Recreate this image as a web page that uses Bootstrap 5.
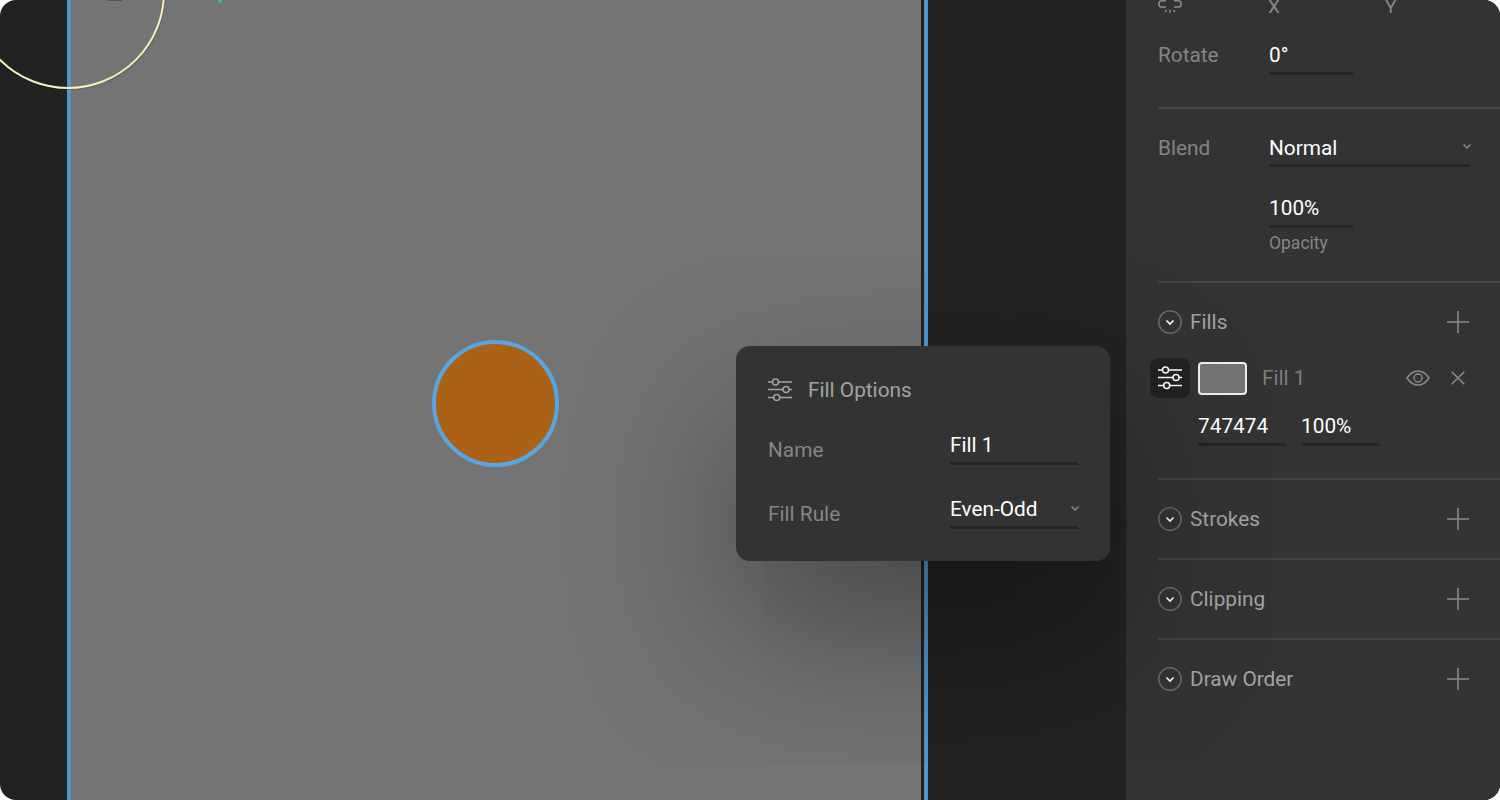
<!DOCTYPE html>
<html lang="en">
<head>
    <meta charset="UTF-8">
    <meta name="viewport" content="width=device-width, initial-scale=1.0">
    <title>Fill Options</title>
    <link href="https://cdn.jsdelivr.net/npm/bootstrap@5.3.0/dist/css/bootstrap.min.css" rel="stylesheet">
    <script src="https://cdn.jsdelivr.net/npm/bootstrap@5.3.0/dist/js/bootstrap.bundle.min.js"></script>
    <style>
        html, body {
            height: 100%;
            margin: 0;
            background: #fff;
            overflow: hidden;
        }

        .app-window {
            width: 1500px;
            height: 800px;
            border-radius: 16px;
            background: #222;
            font-family: Roboto, "Liberation Sans", sans-serif;
            font-size: 20.8px;
            color: #fff;
        }

        /* canvas */
        .stage {
            width: 1126px;
            flex: none;
        }

        .artboard {
            left: 67px;
            top: -10px;
            width: 861px;
            height: 820px;
            background: #747474;
            border-left: 4px solid #4f96cf;
            border-right: 4px solid #4f96cf;
            box-shadow: inset -3px 0 0 #222;
        }

        .speck-grey {
            left: 107px;
            top: -4px;
            width: 15px;
            height: 5px;
            background: #555;
        }

        .speck-teal {
            left: 218px;
            top: -2px;
            width: 4px;
            height: 5px;
            background: #1fc9a0;
            border-radius: 50%;
        }

        .ring-yellow {
            left: -29px;
            top: -105px;
            width: 194px;
            height: 194px;
            border: 2px solid #f6eebd;
            border-radius: 50%;
            box-shadow: 0 0 2px rgba(0, 0, 0, .6);
        }

        .dot-shape {
            left: 432px;
            top: 340px;
            width: 127px;
            height: 127px;
            background: #ab6216;
            border: 4px solid #57a6e2;
            border-radius: 50%;
        }

        /* inspector */
        .inspector {
            width: 374px;
            flex: none;
            background: #333;
            padding-left: 32px;
        }

        .axis-row {
            height: 28px;
            margin-top: -7px;
            color: #8a8a8a;
            font-size: 19px;
        }

        .axis-x {
            margin-left: 86px;
            width: 117px;
        }

        .prop-block {
            border-bottom: 2px solid #444;
        }

        .prop-a { height: 88px; padding-top: 16px; }
        .prop-b { height: 174px; padding-top: 20px; }
        .prop-fills { height: 197px; padding-top: 27px; }
        .prop-fold { height: 80px; }
        .no-rule { border-bottom-color: transparent; }

        .prop-label {
            width: 111px;
            flex: none;
            color: #858585;
            line-height: 37px;
        }

        .val-field {
            height: 38px;
            line-height: 37px;
            border-bottom: 3px solid #252525;
            color: #fff;
        }

        .blend-row .prop-label,
        .blend-row .val-field {
            line-height: 39px;
        }

        .w-84 { width: 84px; }
        .w-201 { width: 201px; }
        .w-87 { width: 87px; }
        .w-79 { width: 79px; }
        .w-128 { width: 128px; }

        .opacity-gap {
            margin-top: 22px;
        }

        .under-note {
            margin-left: 111px;
            margin-top: 3px;
            font-size: 17.5px;
            line-height: 24px;
            color: #858585;
        }

        .tiny-chev {
            width: 10px;
            height: 7px;
            margin-right: -2px;
            margin-top: 14px;
            color: #8a8a8a;
        }

        .fold-title {
            color: #a3a3a3;
            margin-left: 8px;
            line-height: 24px;
        }

        .fold-add {
            margin-right: 31px;
            color: #8a8a8a;
        }

        .fill-row {
            margin-top: 24px;
            margin-left: -8px;
            height: 40px;
        }

        .options-btn {
            width: 40px;
            height: 40px;
            background: #222;
            border-radius: 8px;
            color: #fff;
        }

        .swatch {
            width: 49px;
            height: 33px;
            margin-left: 8px;
            background: #747474;
            border: 2px solid #eee;
            border-radius: 4px;
        }

        .fill-name {
            margin-left: 15px;
            padding-top: 2px;
            color: #7c7c7c;
        }

        .eye-icon {
            margin-right: 21px;
        }

        .close-icon {
            margin-right: 35px;
        }

        .fill-vals {
            margin-left: 40px;
            margin-top: 6px;
        }

        /* popup */
        .fill-popup {
            left: 736px;
            top: 346px;
            width: 374px;
            height: 215px;
            padding: 32px 32px 0;
            background: #333;
            border-radius: 14px;
            box-shadow: 0 70px 160px rgba(0, 0, 0, .4);
        }

        .popup-head {
            height: 24px;
            margin-bottom: 25px;
            color: #a3a3a3;
        }

        .popup-title {
            padding-top: 2px;
        }

        .popup-row {
            height: 64px;
        }

        .popup-label {
            width: 182px;
            flex: none;
            color: #858585;
            padding-top: 8px;
        }
    </style>
</head>
<body>
    <svg width="0" height="0" class="position-absolute">
        <symbol id="ic-sliders" viewBox="0 0 24 24">
            <g fill="none" stroke="currentColor" stroke-width="1.5">
                <path d="M0 4h4.500M10.500 4H24M0 11.500h15M21 11.500h3M0 19.500h5.700M11.700 19.500H24"/>
                <circle cx="7.500" cy="4" r="3"/>
                <circle cx="18" cy="11.500" r="3"/>
                <circle cx="8.700" cy="19.500" r="3"/>
            </g>
        </symbol>
        <symbol id="ic-plus" viewBox="0 0 22 22">
            <path d="M11 0v22M0 11h22" fill="none" stroke="currentColor" stroke-width="1.6"/>
        </symbol>
        <symbol id="ic-chev" viewBox="0 0 10 7">
            <path d="M1.500 1.500 5 5l3.500-3.500" fill="none" stroke="currentColor" stroke-width="1.500"/>
        </symbol>
        <symbol id="ic-fold" viewBox="0 0 24 24">
            <circle cx="12" cy="12" r="11.200" fill="none" stroke="#6a6a6a" stroke-width="1.500"/>
            <path d="M8.500 10.500 12 14l3.500-3.500" fill="none" stroke="#fff" stroke-width="1.600"/>
        </symbol>
    </svg>

    <div class="app-window d-flex position-relative overflow-hidden">
        <div class="stage position-relative overflow-hidden">
            <div class="artboard position-absolute"></div>
            <div class="speck-grey position-absolute"></div>
            <div class="speck-teal position-absolute"></div>
            <div class="ring-yellow position-absolute"></div>
            <div class="dot-shape position-absolute"></div>
        </div>

        <div class="inspector">
            <div class="axis-row d-flex align-items-center">
                <svg width="24" height="14" viewBox="0 0 24 14" class="flex-shrink-0">
                    <path d="M8 .7H4a3.200 3.200 0 0 0 0 6.400h4M16 .7h4a3.200 3.200 0 0 1 0 6.400h-4M12 9.500v3.500M8.500 10l-1.500 2M15.500 10l1.500 2" fill="none" stroke="#8a8a8a" stroke-width="1.500"/>
                </svg>
                <span class="axis-x">X</span>
                <span>Y</span>
            </div>

            <div class="prop-block prop-a d-flex align-items-start">
                <div class="prop-label">Rotate</div>
                <div class="val-field w-84">0°</div>
            </div>

            <div class="prop-block prop-b">
                <div class="blend-row d-flex align-items-start">
                    <div class="prop-label">Blend</div>
                    <div class="val-field w-201 d-flex justify-content-between align-items-start">
                        Normal
                        <svg class="tiny-chev"><use href="#ic-chev"/></svg>
                    </div>
                </div>
                <div class="d-flex opacity-gap">
                    <div class="prop-label"></div>
                    <div class="val-field w-84">100%</div>
                </div>
                <div class="under-note">Opacity</div>
            </div>

            <div class="prop-block prop-fills">
                <div class="d-flex align-items-center">
                    <svg width="24" height="24"><use href="#ic-fold"/></svg>
                    <span class="fold-title">Fills</span>
                    <svg class="fold-add ms-auto" width="22" height="22"><use href="#ic-plus"/></svg>
                </div>
                <div class="fill-row d-flex align-items-center">
                    <div class="options-btn d-flex align-items-center justify-content-center">
                        <svg width="24" height="24"><use href="#ic-sliders"/></svg>
                    </div>
                    <div class="swatch"></div>
                    <span class="fill-name">Fill 1</span>
                    <svg class="eye-icon ms-auto" width="24" height="16" viewBox="0 0 24 16">
                        <path d="M1 8c3-4.500 6.500-7 11-7s8 2.500 11 7c-3 4.500-6.500 7-11 7S4 12.500 1 8Z" fill="none" stroke="#8a8a8a" stroke-width="1.500"/>
                        <circle cx="12" cy="8" r="4" fill="none" stroke="#8a8a8a" stroke-width="1.500"/>
                    </svg>
                    <svg class="close-icon" width="14" height="14" viewBox="0 0 14 14">
                        <path d="M.7.7l12.600 12.600M13.300.7.700 13.300" fill="none" stroke="#8a8a8a" stroke-width="1.500"/>
                    </svg>
                </div>
                <div class="fill-vals d-flex gap-3">
                    <div class="val-field w-87 mt-1">747474</div>
                    <div class="val-field w-79 mt-1">100%</div>
                </div>
            </div>

            <div class="prop-block prop-fold d-flex align-items-center">
                <svg width="24" height="24"><use href="#ic-fold"/></svg>
                <span class="fold-title">Strokes</span>
                <svg class="fold-add ms-auto" width="22" height="22"><use href="#ic-plus"/></svg>
            </div>
            <div class="prop-block prop-fold d-flex align-items-center">
                <svg width="24" height="24"><use href="#ic-fold"/></svg>
                <span class="fold-title">Clipping</span>
                <svg class="fold-add ms-auto" width="22" height="22"><use href="#ic-plus"/></svg>
            </div>
            <div class="prop-block prop-fold no-rule d-flex align-items-center">
                <svg width="24" height="24"><use href="#ic-fold"/></svg>
                <span class="fold-title">Draw Order</span>
                <svg class="fold-add ms-auto" width="22" height="22"><use href="#ic-plus"/></svg>
            </div>
        </div>

        <div class="fill-popup position-absolute">
            <div class="popup-head d-flex align-items-center gap-3">
                <svg width="24" height="24"><use href="#ic-sliders"/></svg>
                <span class="popup-title">Fill Options</span>
            </div>
            <div class="popup-row d-flex align-items-start">
                <div class="popup-label">Name</div>
                <div class="val-field w-128">Fill 1</div>
            </div>
            <div class="popup-row d-flex align-items-start">
                <div class="popup-label">Fill Rule</div>
                <div class="val-field w-128 d-flex justify-content-between align-items-start">
                    Even-Odd
                    <svg class="tiny-chev"><use href="#ic-chev"/></svg>
                </div>
            </div>
        </div>
    </div>
</body>
</html>
